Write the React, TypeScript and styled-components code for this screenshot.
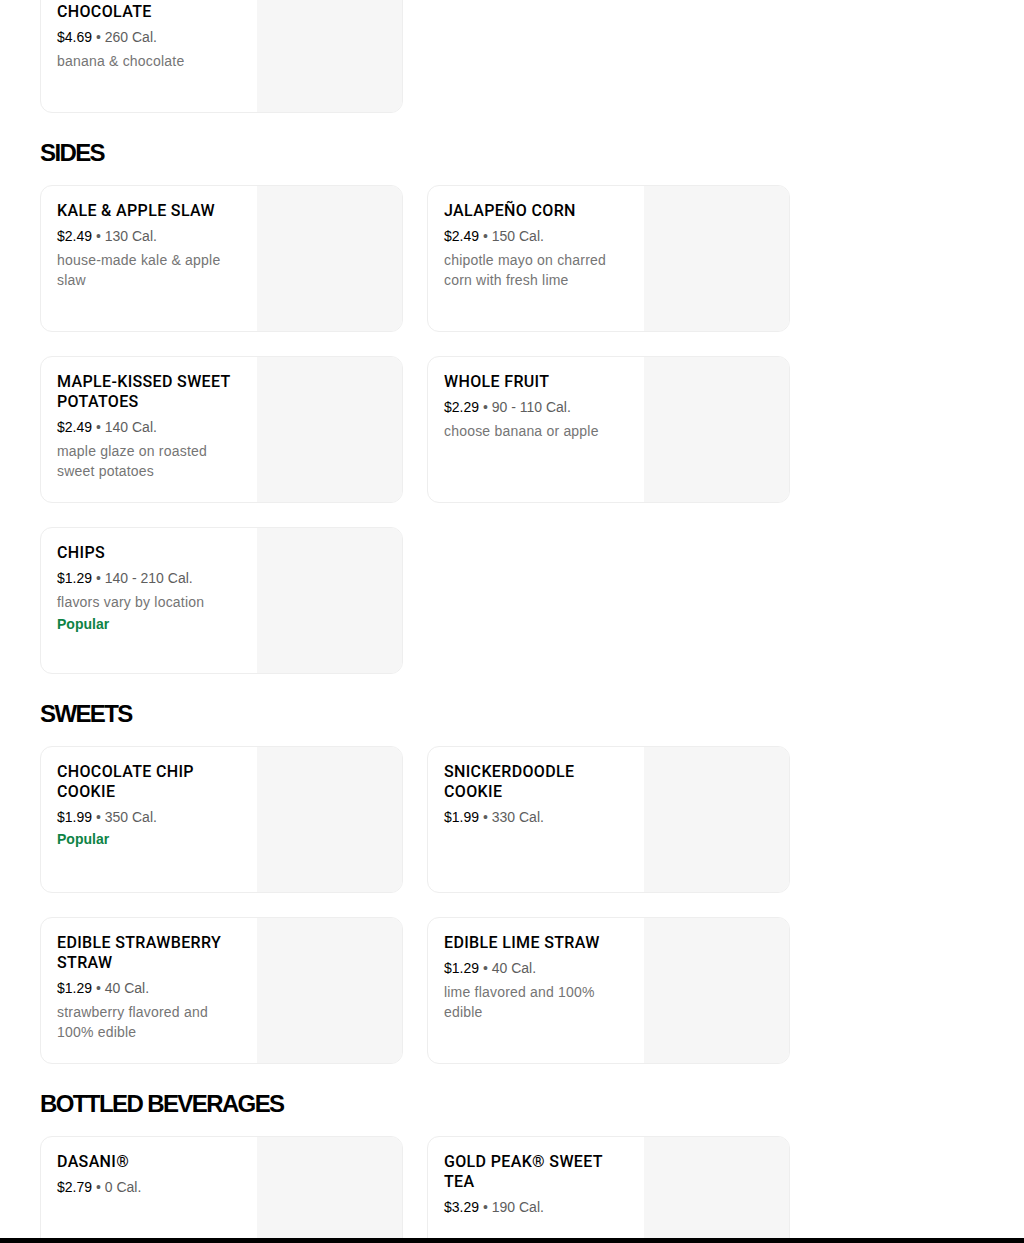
import React from 'react'
import styled, { createGlobalStyle } from 'styled-components'

type Item = {
  name: string
  price: string
  cal: string
  desc?: string
  popular?: boolean
}

type Section = {
  title?: string
  items: Item[]
}

const sections: Section[] = [
  {
    items: [
      { name: 'BANANA DARK CHOCOLATE', price: '$4.69', cal: '260 Cal.', desc: 'banana & chocolate' },
    ],
  },
  {
    title: 'SIDES',
    items: [
      { name: 'KALE & APPLE SLAW', price: '$2.49', cal: '130 Cal.', desc: 'house-made kale & apple slaw' },
      { name: 'JALAPEÑO CORN', price: '$2.49', cal: '150 Cal.', desc: 'chipotle mayo on charred corn with fresh lime' },
      { name: 'MAPLE-KISSED SWEET POTATOES', price: '$2.49', cal: '140 Cal.', desc: 'maple glaze on roasted sweet potatoes' },
      { name: 'WHOLE FRUIT', price: '$2.29', cal: '90 - 110 Cal.', desc: 'choose banana or apple' },
      { name: 'CHIPS', price: '$1.29', cal: '140 - 210 Cal.', desc: 'flavors vary by location', popular: true },
    ],
  },
  {
    title: 'SWEETS',
    items: [
      { name: 'CHOCOLATE CHIP COOKIE', price: '$1.99', cal: '350 Cal.', popular: true },
      { name: 'SNICKERDOODLE COOKIE', price: '$1.99', cal: '330 Cal.' },
      { name: 'EDIBLE STRAWBERRY STRAW', price: '$1.29', cal: '40 Cal.', desc: 'strawberry flavored and 100% edible' },
      { name: 'EDIBLE LIME STRAW', price: '$1.29', cal: '40 Cal.', desc: 'lime flavored and 100% edible' },
    ],
  },
  {
    title: 'BOTTLED BEVERAGES',
    items: [
      { name: 'DASANI®', price: '$2.79', cal: '0 Cal.' },
      { name: 'GOLD PEAK® SWEET TEA', price: '$3.29', cal: '190 Cal.' },
    ],
  },
]

function App() {
  return (
    <>
      <GlobalStyle />
      <Page>
        {sections.map((section, i) => (
          <SectionBlock key={i}>
            {section.title && <SectionTitle>{section.title}</SectionTitle>}
            <Grid>
              {section.items.map((item) => (
                <Card key={item.name}>
                  <Info>
                    <Name>{item.name}</Name>
                    <PriceRow>
                      <Price>{item.price}</Price>
                      <Cal> • {item.cal}</Cal>
                    </PriceRow>
                    {item.desc && <Desc>{item.desc}</Desc>}
                    {item.popular && <Popular>Popular</Popular>}
                  </Info>
                  <Thumb />
                </Card>
              ))}
            </Grid>
          </SectionBlock>
        ))}
      </Page>
      <BottomBar />
    </>
  )
}

const GlobalStyle = createGlobalStyle`
  body {
    margin: 0;
    background: #fff;
    font-family: "Liberation Sans", Arial, sans-serif;
    color: #000;
  }
`
const Page = styled.main`
  margin-top: -34px;
  padding: 0 40px 60px;
  display: flex;
  flex-direction: column;
  gap: 24px;
`
const SectionBlock = styled.section`
  display: flex;
  flex-direction: column;
`
const SectionTitle = styled.h2`
  margin: 0 0 16px;
  font-size: 24px;
  line-height: 32px;
  font-weight: 700;
  letter-spacing: -1.6px;
`
const Grid = styled.div`
  display: grid;
  grid-template-columns: 363px 363px;
  gap: 24px;
`
const Card = styled.div`
  height: 147px;
  box-sizing: border-box;
  border: 1px solid #eeeeee;
  border-radius: 12px;
  overflow: hidden;
  display: flex;
`
const Info = styled.div`
  flex: 1;
  padding: 15px 16px;
  display: flex;
  flex-direction: column;
`
const Name = styled.div`
  font-family: Roboto, "Liberation Sans", sans-serif;
  font-size: 16px;
  line-height: 20px;
  font-weight: 500;
  letter-spacing: 0.35px;
  margin-bottom: 5px;
`
const PriceRow = styled.div`
  font-size: 14px;
  line-height: 20px;
`
const Price = styled.span`
  color: #000;
`
const Cal = styled.span`
  color: #5e5e5e;
`
const Desc = styled.div`
  font-size: 14px;
  line-height: 20px;
  color: #757575;
  letter-spacing: 0.2px;
  margin-top: 4px;
`
const Popular = styled.div`
  font-size: 14px;
  line-height: 20px;
  font-weight: 700;
  color: #0e8345;
  margin-top: 2px;
`
const Thumb = styled.div`
  width: 145px;
  flex-shrink: 0;
  background: #f6f6f6;
`
const BottomBar = styled.div`
  position: fixed;
  left: 0;
  right: 0;
  bottom: 0;
  height: 5px;
  background: #000;
`

export default App
